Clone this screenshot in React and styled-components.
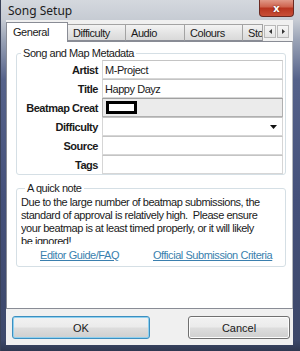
import React from "react";
import styled, { createGlobalStyle } from "styled-components";

const Global = createGlobalStyle`
  html, body { margin: 0; padding: 0; background: #3f4b6b; }
  body { font-family: "Liberation Sans", Arial, sans-serif; letter-spacing: -0.45px; }
  * { box-sizing: border-box; }
`;

const Window = styled.div`
  width: 300px;
  height: 351px;
  display: flex;
  flex-direction: column;
  padding: 0 7px 6px 5px;
  background: linear-gradient(to bottom, #d4d8de 0px, #c6cbd3 20px, #9aa3b6 40px, #55628a 80px, #44507a 200px, #3d486a 340px, #2f3850 351px);
  border-left: 1px solid #3a4258;
  overflow: hidden;
`;

const TitleBar = styled.div`
  height: 20px;
  flex: none;
  display: flex;
  align-items: center;
  position: relative;
  padding-left: 2px;
  font-family: "Noto Sans", "Liberation Sans", sans-serif;
  letter-spacing: 0;
  font-size: 12px;
  color: #1c1c1c;
`;

const CloseBtn = styled.div`
  position: absolute;
  right: -1px;
  top: -1px;
  width: 35px;
  height: 18px;
  border: 1px solid #6b2a22;
  border-top: none;
  border-radius: 0 0 4px 4px;
  background: linear-gradient(to bottom, #e3a090 0%, #cf6550 45%, #b83520 55%, #c85038 100%);
  display: flex;
  align-items: center;
  justify-content: center;
  color: #fff;
  font-size: 11px;
  font-weight: bold;
  text-shadow: 0 0 2px #5a1a10;
`;

const Client = styled.div`
  flex: 1;
  display: flex;
  flex-direction: column;
  background: #f0f0f0;
  padding-top: 1px;
`;

const TabRow = styled.div`
  height: 20px;
  display: flex;
  align-items: flex-end;
  position: relative;
  z-index: 1;
`;

const Tab = styled.div`
  width: ${p => p.w}px;
  height: ${p => (p.active ? 20 : 17)}px;
  margin-bottom: ${p => (p.active ? -1 : 0)}px;
  padding: ${p => (p.active ? "3px 0 0 6px" : "2px 0 0 5px")};
  font-size: 11px;
  color: #1a1a1a;
  background: ${p => (p.active ? "#fff" : "linear-gradient(to bottom, #f3f3f3, #e5e5e5 50%, #d9d9d9)")};
  border: 1px solid ${p => (p.active ? "#898c95" : "#a3a3a3")};
  border-bottom: ${p => (p.active ? "none" : "1px solid #898c95")};
  border-left: ${p => (p.first || p.active ? "" : "none")};
  overflow: hidden;
  white-space: nowrap;
`;

const Scroller = styled.div`
  display: flex;
  gap: 1px;
  margin: 0 0 3px 1px;
`;

const ScrollBtn = styled.div`
  width: 12px;
  height: 13px;
  border: 1px solid #b9b9b9;
  background: linear-gradient(to bottom, #f6f6f6, #e4e4e4);
  display: flex;
  align-items: center;
  justify-content: center;
`;

const Panel = styled.div`
  flex: 1;
  background: #fff;
  border: 1px solid #898c95;
  border-right: 1px solid #b4b7bd;
  padding: 5px 6px 0 9px;
  display: flex;
  flex-direction: column;
`;

const Group = styled.fieldset`
  margin: 0;
  padding: 0 2px 0 0;
  border: 1px solid #d5dfe5;
  border-radius: 3px;
  min-width: 0;
`;

const Legend = styled.legend`
  margin-left: 4px;
  padding: 0 2px;
  font-size: 11px;
  line-height: 13px;
  color: #1a1a1a;
`;

const Rows = styled.div`
  display: grid;
  grid-template-columns: 81px 1fr;
  column-gap: 4px;
`;

const Label = styled.div`
  height: 19px;
  display: flex;
  align-items: center;
  justify-content: flex-end;
  font-size: 11px;
  font-weight: bold;
  color: #1a1a1a;
  white-space: nowrap;
`;

const Field = styled.div`
  height: 19px;
  border: 1px solid ${p => (p.disabled ? "#b0b0b0" : "#d6d6d6")};
  border-top-color: ${p => (p.disabled ? "#a0a0a0" : "#c4c4c4")};
  background: ${p => (p.disabled ? "#ebebeb" : "#fff")};
  font-size: 11px;
  color: #1a1a1a;
  padding-left: 2px;
  display: flex;
  align-items: center;
  justify-content: space-between;
`;

const Censor = styled.div`
  width: 31px;
  height: 13px;
  margin-left: 1px;
  background: #fff;
  border: 3px solid #000;
`;

const Note = styled(Group)`
  margin-top: 7px;
  padding: 0 2px 4px 4px;
`;

const NoteText = styled.div`
  width: 245px;
  font-size: 11px;
  line-height: 13px;
  height: 48px;
  overflow: hidden;
  color: #1a1a1a;
  margin-top: 1px;
`;

const Links = styled.div`
  display: flex;
  margin-top: 5px;
  font-size: 11px;
  line-height: 13px;
  white-space: nowrap;
`;

const LinkCell = styled.div`
  width: ${p => p.w || "auto"};
  padding-left: ${p => p.pad}px;
`;

const Link = styled.a`
  color: #3a7fae;
  text-decoration: underline;
`;

const ButtonBar = styled.div`
  height: 36px;
  flex: none;
  display: flex;
  justify-content: space-between;
  align-items: flex-start;
  padding: 7px 3px 0 6px;
`;

const Button = styled.div`
  width: ${p => p.w}px;
  height: 23px;
  border: 1px solid ${p => (p.focus ? "#3c8fc0" : "#707070")};
  border-radius: 3px;
  background: linear-gradient(to bottom, #f2f2f2 0%, #ebebeb 48%, #dddddd 52%, #cfcfcf 100%);
  box-shadow: inset 0 0 0 1px ${p => (p.focus ? "#8fd0ef" : "#fcfcfc")};
  display: flex;
  align-items: center;
  justify-content: center;
  font-size: 11px;
  letter-spacing: 0;
  color: #1a1a1a;
`;

const Arrow = ({ dir }) => (
  <svg width="5" height="5" viewBox="0 0 5 5">
    <path d={dir === "left" ? "M4 0 L1 2.5 L4 5 Z" : "M1 0 L4 2.5 L1 5 Z"} fill="#333" />
  </svg>
);

const tabs = [
  { name: "General", w: 62, active: true },
  { name: "Difficulty", w: 58 },
  { name: "Audio", w: 59 },
  { name: "Colours", w: 58 },
  { name: "Storyboard", w: 20 },
];

export default function App() {
  return (
    <>
      <Global />
      <Window>
        <TitleBar>
          Song Setup
          <CloseBtn>x</CloseBtn>
        </TitleBar>
        <Client>
          <TabRow>
            {tabs.map((t, i) => (
              <Tab key={t.name} w={t.w} active={t.active} first={i === 0}>
                {t.name}
              </Tab>
            ))}
            <Scroller>
              <ScrollBtn><Arrow dir="left" /></ScrollBtn>
              <ScrollBtn><Arrow dir="right" /></ScrollBtn>
            </Scroller>
          </TabRow>
          <Panel>
            <Group>
              <Legend>Song and Map Metadata</Legend>
              <Rows>
                <Label>Artist</Label>
                <Field>M-Project</Field>
                <Label>Title</Label>
                <Field>Happy Dayz</Field>
                <Label>Beatmap Creat</Label>
                <Field disabled><Censor /></Field>
                <Label>Difficulty</Label>
                <Field>
                  <span />
                  <svg width="7" height="4" viewBox="0 0 7 4" style={{ marginRight: 5 }}>
                    <path d="M0 0 L7 0 L3.5 4 Z" fill="#111" />
                  </svg>
                </Field>
                <Label>Source</Label>
                <Field />
                <Label>Tags</Label>
                <Field />
              </Rows>
            </Group>
            <Note>
              <Legend>A quick note</Legend>
              <NoteText>
                Due to the large number of beatmap submissions, the standard of approval is
                relatively high.&nbsp; Please ensure your beatmap is at least timed properly, or it
                will likely be ignored!
              </NoteText>
              <Links>
                <LinkCell w="132px" pad={19}><Link>Editor Guide/FAQ</Link></LinkCell>
                <LinkCell pad={0}><Link>Official Submission Criteria</Link></LinkCell>
              </Links>
            </Note>
          </Panel>
          <ButtonBar>
            <Button w={138} focus>OK</Button>
            <Button w={102}>Cancel</Button>
          </ButtonBar>
        </Client>
      </Window>
    </>
  );
}
